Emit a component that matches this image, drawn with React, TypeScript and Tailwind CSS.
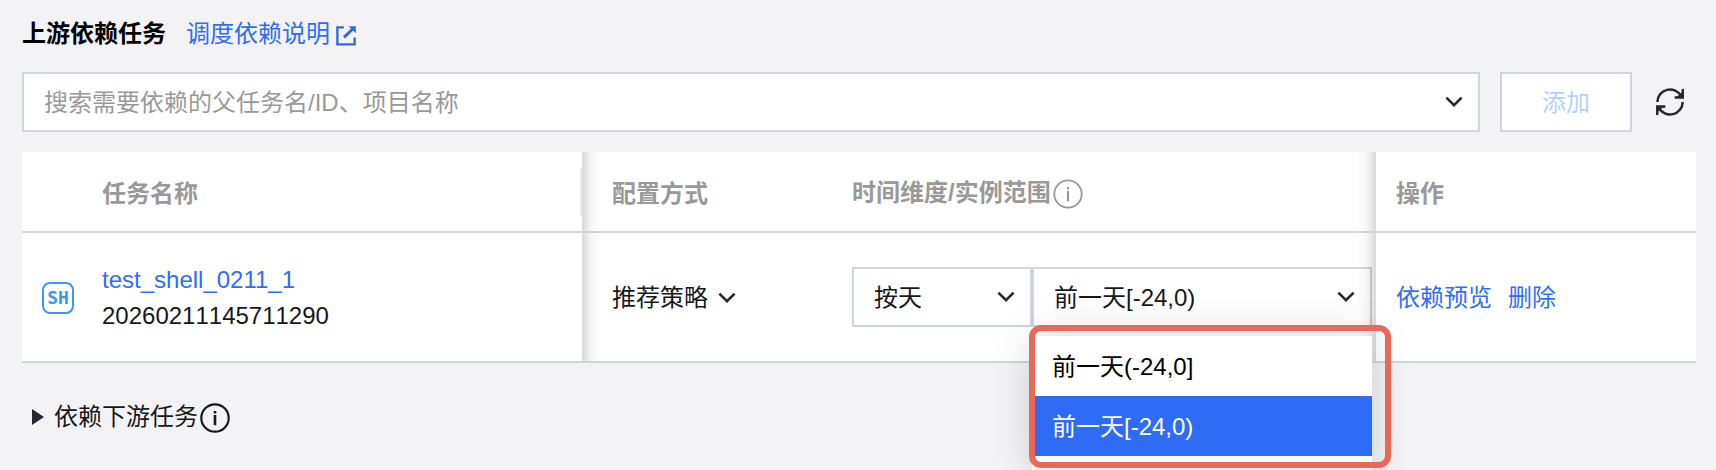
import React, { useState } from 'react';

interface Task {
  id: string;
  name: string;
  strategy: string;
}

const tasks: Task[] = [
  { id: '20260211145711290', name: 'test_shell_0211_1', strategy: '推荐策略' },
];

const rangeOptions = ['前一天(-24,0]', '前一天[-24,0)'];

const ChevronIcon: React.FC<{ className?: string }> = ({ className }) => (
  <svg className={className} width="18" height="12" viewBox="0 0 18 12" fill="none" stroke="#26282c" strokeWidth="2.6" aria-hidden="true">
    <path d="M1.4 1.6 9 9.2l7.6-7.6" />
  </svg>
);

const InfoIcon: React.FC<{ strokeWidth?: number }> = ({ strokeWidth = 2.2 }) => (
  <svg className="mt-0.5 ml-0.5" width="30" height="30" viewBox="0 0 30 30" fill="none" stroke="currentColor" strokeWidth={strokeWidth} aria-hidden="true">
    <circle cx="15" cy="15" r="13.7" />
    <path d="M15 12v10.2M15 8v2.4" strokeWidth={strokeWidth + 0.4} />
  </svg>
);

const ExternalIcon = () => (
  <svg className="mt-1" width="20" height="20" viewBox="0 0 19 19" fill="none" stroke="#3467dd" strokeWidth="2.2" aria-hidden="true">
    <path d="M7.5 1.3H1.3v16.2h16.4V11" />
    <path d="M7.6 10.8 16 2.6" strokeWidth="2.8" />
    <path d="M12 .2h6.8V7z" fill="#3467dd" stroke="none" />
  </svg>
);

const RefreshIcon = () => (
  <svg width="28" height="28" viewBox="0 0 28 28" fill="none" stroke="#26282c" strokeWidth="2.5" aria-hidden="true">
    <path d="M1.3 14A12.7 12.7 0 0 1 25.2 8.2" />
    <path d="M26.7 14A12.7 12.7 0 0 1 2.8 19.8" />
    <path d="M26.8 1v8.4H18.6" />
    <path d="M1.2 27v-8.4H9.4" />
    <path d="M26.9 3.4v6.2H20zM1.1 24.6v-6.2H8z" fill="#26282c" stroke="none" />
  </svg>
);

const ShellIcon = () => (
  <span className="flex size-8 shrink-0 items-center justify-center rounded-lg border-2 border-[#4096ee] font-['DejaVu_Sans_Mono',monospace] text-lg leading-none font-bold text-[#4096ee]">
    SH
  </span>
);

const App: React.FC = () => {
  const [keyword, setKeyword] = useState('');
  const [range, setRange] = useState(rangeOptions[1]);

  return (
    <div className="relative min-h-screen overflow-hidden bg-[#f3f3f5] pt-4 pr-5 pl-[22px] font-['Liberation_Sans','Noto_Sans_CJK_SC',sans-serif] text-2xl leading-9 text-[#16181c]">
      {/* Title */}
      <div className="flex items-center gap-5">
        <h2 className="font-bold text-black">上游依赖任务</h2>
        <a href="#help" className="flex items-center gap-1.5 text-[#2f6df6]">
          调度依赖说明
          <ExternalIcon />
        </a>
      </div>

      {/* Search */}
      <div className="mt-5 flex items-center gap-5">
        <div className="relative flex-1">
          <input
            type="text"
            aria-label="搜索父任务"
            value={keyword}
            onChange={(e) => setKeyword(e.target.value)}
            placeholder="搜索需要依赖的父任务名/ID、项目名称"
            className="block h-15 w-full border-2 border-[#cfd5de] bg-white px-5 pt-0.5 outline-none placeholder:text-[#999]"
          />
          <ChevronIcon className="pointer-events-none absolute top-6 right-[17px]" />
        </div>
        <button type="button" disabled className="h-15 w-33 border-2 border-[#cfd5de] bg-white pt-0.5 text-[#b3d1ff]">
          添加
        </button>
        <button type="button" aria-label="刷新" className="mr-3 ml-1">
          <RefreshIcon />
        </button>
      </div>

      {/* Upstream tasks */}
      <table className="mt-5 w-full table-fixed border-collapse bg-white text-left">
        <colgroup>
          <col className="w-[560px]" />
          <col className="w-60" />
          <col />
          <col className="w-80" />
        </colgroup>
        <thead>
          <tr className="h-20 border-b-2 border-[#cfd5de] text-[#999]">
            <th className="relative pt-1 pl-20 font-bold after:absolute after:inset-y-0 after:left-full after:w-5 after:bg-linear-to-r after:from-black/15 after:via-black/3 after:to-transparent">
              任务名称
              <span className="absolute top-4 right-0 h-12 w-0.5 bg-[#e8eaef]" />
            </th>
            <th className="pt-1 pl-[30px] font-bold">配置方式</th>
            <th className="pt-0.5 pl-[30px] font-bold">
              <span className="flex items-center">
                时间维度/实例范围
                <InfoIcon strokeWidth={1.8} />
              </span>
            </th>
            <th className="relative pt-1 pl-5 font-bold before:absolute before:inset-y-0 before:right-full before:w-5 before:bg-linear-to-l before:from-black/15 before:via-black/3 before:to-transparent">
              操作
            </th>
          </tr>
        </thead>
        <tbody>
          {tasks.map((task) => (
            <tr key={task.id} className="h-[130px] border-b-2 border-[#cfd5de]">
              <td className="relative pt-0.5 pl-5 after:absolute after:inset-y-0 after:left-full after:w-5 after:bg-linear-to-r after:from-black/15 after:via-black/3 after:to-transparent">
                <div className="flex items-center gap-7">
                  <ShellIcon />
                  <div>
                    <a href="#task" className="block text-[#2f6df6]">{task.name}</a>
                    <div className="[font-kerning:none]">{task.id}</div>
                  </div>
                </div>
              </td>
              <td className="pt-0.5 pl-[30px]">
                <button type="button" className="flex items-center gap-2.5">
                  {task.strategy}
                  <ChevronIcon />
                </button>
              </td>
              <td className="pr-1 pl-[30px]">
                <div className="flex">
                  <div className="relative w-45">
                    <select aria-label="时间维度" className="block h-15 w-full appearance-none border-2 border-[#cfd5de] bg-white px-5 pt-0.5 outline-none">
                      <option>按天</option>
                    </select>
                    <ChevronIcon className="pointer-events-none absolute top-6 right-[17px]" />
                  </div>
                  <div className="relative flex-1">
                    <select
                      aria-label="实例范围"
                      value={range}
                      onChange={(e) => setRange(e.target.value)}
                      className="block h-15 w-full appearance-none border-2 border-[#cfd5de] bg-white px-5 pt-0.5 outline-none"
                    >
                      {rangeOptions.map((option) => (
                        <option key={option}>{option}</option>
                      ))}
                    </select>
                    <ChevronIcon className="pointer-events-none absolute top-6 right-[17px]" />

                    {/* Open menu */}
                    <div className="absolute inset-x-0 top-full z-10 mt-[9px] bg-white pb-5 shadow-[0_0_40px_rgba(0,0,0,0.16)]">
                      {rangeOptions.map((option) => (
                        <button
                          key={option}
                          type="button"
                          onClick={() => setRange(option)}
                          className={`block h-15 w-full px-5 pt-0.5 text-left ${
                            option === range ? 'bg-[#2e6cf6] text-white' : 'bg-white text-black'
                          }`}
                        >
                          {option}
                        </button>
                      ))}
                    </div>
                    <div className="pointer-events-none absolute top-full -right-[19px] -left-[3px] z-20 -mt-0.5 h-[143px] rounded-xl border-6 border-[#eb6757]" />
                  </div>
                </div>
              </td>
              <td className="relative pt-0.5 pl-5 before:pointer-events-none before:absolute before:inset-y-0 before:right-full before:w-5 before:bg-linear-to-l before:from-black/15 before:via-black/3 before:to-transparent">
                <div className="flex gap-4 text-[#2f6df6]">
                  <a href="#preview">依赖预览</a>
                  <a href="#delete">删除</a>
                </div>
              </td>
            </tr>
          ))}
        </tbody>
      </table>

      {/* Downstream tasks */}
      <button type="button" className="mt-9 flex items-center pl-2.5">
        <svg className="mr-2.5" width="12" height="16" viewBox="0 0 12 16" fill="#26282c" aria-hidden="true">
          <path d="M0 0v16l12-8z" />
        </svg>
        依赖下游任务
        <InfoIcon />
      </button>
    </div>
  );
};

export default App;
